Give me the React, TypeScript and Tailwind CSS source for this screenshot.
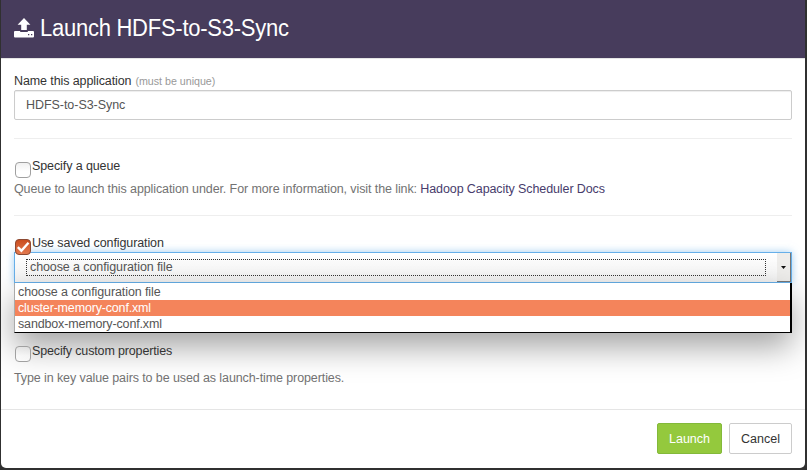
import type { ReactNode } from 'react';

function UploadIcon() {
  return (
    <svg width="20" height="20" viewBox="0 0 20 20" fill="#fff" className="mt-[18px] shrink-0">
      <path d="M10 0 16.4 6.8H12.8V12H7.2V6.8H3.6Z" />
      <path d="M1 13H6.2V14H13.8V13H19Q20 13 20 14V18.5Q20 19.5 19 19.5H1Q0 19.5 0 18.5V14Q0 13 1 13ZM14 16V17.3H15.3V16ZM17 16V17.3H18.3V16Z" fillRule="evenodd" />
    </svg>
  );
}

function Checkbox({ checked = false }: { checked?: boolean }) {
  return (
    <svg width="16" height="16" viewBox="0 0 16 16" className="relative z-10 mt-1 ml-px shrink-0">
      <defs>
        <linearGradient id="on" x1="0" y1="0" x2="0" y2="1">
          <stop offset="0" stopColor="#c94c1d" />
          <stop offset="1" stopColor="#e47b51" />
        </linearGradient>
        <linearGradient id="off" x1="0" y1="0" x2="0" y2="1">
          <stop offset="0" stopColor="#e2e2e2" />
          <stop offset=".6" stopColor="#ffffff" />
        </linearGradient>
      </defs>
      <rect x=".5" y=".5" width="15" height="15" rx="3.5" fill={checked ? 'url(#on)' : 'url(#off)'} fillOpacity={checked ? 1 : 0.5} stroke={checked ? '#8c4932' : '#a0a0a0'} />
      {checked && <path d="M2.8 8.2 6.4 11.7 13.5 3.8" fill="none" stroke="#fff" strokeWidth="2.4" />}
    </svg>
  );
}

function Option({ label, children, checked }: { label: ReactNode; children?: ReactNode; checked?: boolean }) {
  return (
    <div>
      <label className="flex h-5 text-[#333]">
        <Checkbox checked={checked} />
        <span className="ml-px">{label}</span>
      </label>
      {children}
    </div>
  );
}

export default function App() {
  return (
    <div className="h-[470px] w-[807px] overflow-hidden bg-[#303030] px-px pr-[2px] font-['Liberation_Sans',Arial,sans-serif] text-[12.5px] leading-4 tracking-[-0.1px] whitespace-nowrap">
      <div className="flex h-[468px] flex-col overflow-hidden rounded-b-[5px] bg-white">
        <header className="flex h-[59px] shrink-0 border-b border-[#e5e5e5] bg-[#473c5c] pl-[13px] text-white">
          <UploadIcon />
          <h1 className="mt-[14px] ml-[6px] origin-left scale-x-[.955] text-[23px] leading-[29px] tracking-[-0.25px]">Launch HDFS-to-S3-Sync</h1>
        </header>
        <main className="h-[350px] shrink-0 px-[13px] pt-[14px]">
          <div className="flex h-[17px] text-[#333]">
            <span>Name this application</span>
            <span className="ml-1 text-[10.7px] tracking-[-0.02px] text-[#999]">(must be unique)</span>
          </div>
          <div className="flex h-[30px] items-center rounded-[2px] border border-[#ccc] pl-[11px] tracking-[-0.05px] text-[#555] shadow-[inset_0_1px_1px_rgba(0,0,0,.075)]">HDFS-to-S3-Sync</div>
          <hr className="mt-[18px] border-[#eee]" />
          <div className="mt-[19px]">
            <Option label="Specify a queue">
              <p className="mt-[3px] text-[#737373]">
                Queue to launch this application under. For more information, visit the link: <a className="text-[#473c6c]">Hadoop Capacity Scheduler Docs</a>
              </p>
            </Option>
          </div>
          <hr className="mt-[18px] border-[#eee]" />
          <div className="mt-[19px]">
            <Option label="Use saved configuration" checked />
          </div>
          <div className="relative -mt-[3px] h-[31px]">
            <div className="flex h-[31px] border border-[#66afe9] bg-linear-to-b from-white to-[#f2f2f2] pl-[11px] shadow-[0_0_8px_rgba(102,175,233,.6)]">
              <div className="mt-[6px] h-[17px] w-[740px] border border-dotted border-[#333] pl-[3px] leading-[15px] text-[#555]">choose a configuration file</div>
              <div className="ml-auto flex w-[14px] items-center justify-center border-r border-b border-[#777] bg-[#eeedeb]">
                <svg width="5" height="3" viewBox="0 0 5 3"><path d="M0 0H5L2.5 3Z" fill="#111" /></svg>
              </div>
            </div>
            <div className="absolute top-[31px] left-0 w-[778px] border-r-2 border-b border-l border-r-black border-b-black border-l-[#aaa] bg-white text-[#555] shadow-[0_14px_32px_rgba(0,0,0,.36)]">
              <div className="h-[17px] pt-px pl-[3px]">choose a configuration file</div>
              <div className="h-4 bg-[#f4845b] pl-[3px] tracking-[-0.17px] text-white">cluster-memory-conf.xml</div>
              <div className="h-4 pl-[3px] tracking-[-0.15px]">sandbox-memory-conf.xml</div>
            </div>
          </div>
          <div className="mt-[59px]">
            <Option label={<span className="relative top-px tracking-[-0.15px]">Specify custom properties</span>}>
              <p className="mt-2 text-[#737373]">Type in key value pairs to be used as launch-time properties.</p>
            </Option>
          </div>
        </main>
        <footer className="flex h-[59px] shrink-0 justify-end gap-[7px] border-t border-[#e5e5e5] pt-[13px] pr-[13px]">
          <button className="h-[31px] w-[65px] rounded-[2px] border border-[#83b93a] bg-[#94c93d] tracking-normal text-white">Launch</button>
          <button className="h-[31px] w-[63px] rounded-[2px] border border-[#ccc] bg-white tracking-normal text-[#333]">Cancel</button>
        </footer>
      </div>
    </div>
  );
}
